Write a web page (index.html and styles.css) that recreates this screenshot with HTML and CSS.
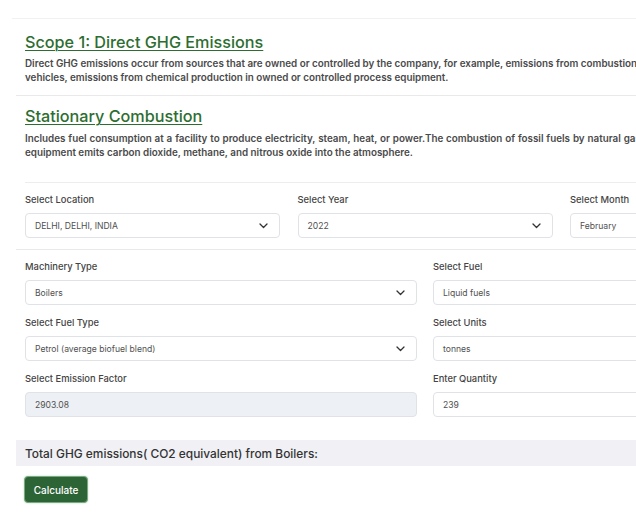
FILE: index.html
```html
<!DOCTYPE html>
<html lang="en">
<head>
<meta charset="utf-8">
<title>Scope 1: Direct GHG Emissions</title>
<link rel="stylesheet" href="styles.css">
</head>
<body>
<div class="page">
  <div class="card">
    <section class="intro">
      <h1 class="title">Scope 1: Direct GHG Emissions</h1>
      <p class="desc"><span class="line">Direct GHG emissions occur from sources that are owned or controlled by the company, for example, emissions from combustion in owned or controlled boilers, furnaces,</span><span class="line">vehicles, emissions from chemical production in owned or controlled process equipment.</span></p>
    </section>
    <hr class="sep sep-wide">
    <section class="intro">
      <h2 class="title">Stationary Combustion</h2>
      <p class="desc desc-just"><span class="line line-just">Includes fuel consumption at a facility to produce electricity, steam, heat, or power.The combustion of fossil fuels by natural gas boilers, furnaces and other</span><span class="line">equipment emits carbon dioxide, methane, and nitrous oxide into the atmosphere.</span></p>
    </section>
    <hr class="sep sep-inner">
    <div class="grid grid-3">
      <div class="field">
        <label class="label">Select Location</label>
        <div class="select"><span>DELHI, DELHI, INDIA</span><svg class="chev" width="9" height="6" viewBox="0 0 9 6"><path d="M1 1l3.5 3.5L8 1" fill="none" stroke="#333" stroke-width="1.3" stroke-linecap="round" stroke-linejoin="round"/></svg></div>
      </div>
      <div class="field">
        <label class="label">Select Year</label>
        <div class="select"><span>2022</span><svg class="chev" width="9" height="6" viewBox="0 0 9 6"><path d="M1 1l3.5 3.5L8 1" fill="none" stroke="#333" stroke-width="1.3" stroke-linecap="round" stroke-linejoin="round"/></svg></div>
      </div>
      <div class="field">
        <label class="label">Select Month</label>
        <div class="select"><span>February</span><svg class="chev" width="9" height="6" viewBox="0 0 9 6"><path d="M1 1l3.5 3.5L8 1" fill="none" stroke="#333" stroke-width="1.3" stroke-linecap="round" stroke-linejoin="round"/></svg></div>
      </div>
    </div>
    <hr class="sep sep-wide">
    <div class="grid grid-2">
      <div class="field">
        <label class="label">Machinery Type</label>
        <div class="select"><span>Boilers</span><svg class="chev" width="9" height="6" viewBox="0 0 9 6"><path d="M1 1l3.5 3.5L8 1" fill="none" stroke="#333" stroke-width="1.3" stroke-linecap="round" stroke-linejoin="round"/></svg></div>
      </div>
      <div class="field">
        <label class="label">Select Fuel</label>
        <div class="select"><span>Liquid fuels</span><svg class="chev" width="9" height="6" viewBox="0 0 9 6"><path d="M1 1l3.5 3.5L8 1" fill="none" stroke="#333" stroke-width="1.3" stroke-linecap="round" stroke-linejoin="round"/></svg></div>
      </div>
      <div class="field">
        <label class="label">Select Fuel Type</label>
        <div class="select"><span>Petrol (average biofuel blend)</span><svg class="chev" width="9" height="6" viewBox="0 0 9 6"><path d="M1 1l3.5 3.5L8 1" fill="none" stroke="#333" stroke-width="1.3" stroke-linecap="round" stroke-linejoin="round"/></svg></div>
      </div>
      <div class="field">
        <label class="label">Select Units</label>
        <div class="select"><span>tonnes</span><svg class="chev" width="9" height="6" viewBox="0 0 9 6"><path d="M1 1l3.5 3.5L8 1" fill="none" stroke="#333" stroke-width="1.3" stroke-linecap="round" stroke-linejoin="round"/></svg></div>
      </div>
      <div class="field">
        <label class="label">Select Emission Factor</label>
        <div class="input input-disabled">2903.08</div>
      </div>
      <div class="field">
        <label class="label">Enter Quantity</label>
        <div class="input">239</div>
      </div>
    </div>
    <div class="total">Total GHG emissions( CO2 equivalent) from Boilers:</div>
    <button class="btn" type="button">Calculate</button>
  </div>
</div>
</body>
</html>
```
FILE: styles.css
```css
html, body {
  margin: 0;
  padding: 0;
  background: #fff;
  overflow: hidden;
}
body {
  font-family: Inter, "Open Sans", sans-serif;
  color: #444;
}
.page {
  width: 900px;
  padding-top: 18px;
  padding-left: 12px;
}
.card {
  border-top: 1px solid #f1f1f1;
  padding-bottom: 20px;
}
.intro {
  padding-left: 13px;
}
.title {
  margin: 0;
  font-size: 16.2px;
  line-height: 24px;
  font-weight: 500;
  color: #2d6e30;
  text-decoration: underline;
  text-decoration-thickness: 1px;
  text-underline-offset: 2px;
}
h1.title {
  padding-top: 11px;
}
h2.title {
  padding-top: 8px;
}
.desc {
  margin: 2px 0 0;
  font-size: 9.85px;
  line-height: 14px;
  font-weight: 600;
  color: #4a4a4a;
  width: 840px;
}
.desc-just {
  margin-top: 3px;
}
.line {
  display: block;
  white-space: nowrap;
}
.line-just {
  word-spacing: 0.4px;
}
.sep {
  border: 0;
  height: 1px;
  background: #e9e9e9;
  margin: 0;
}
.sep-wide {
  margin-left: 4px;
  margin-top: 11px;
}
.sep-inner {
  margin-left: 13px;
  margin-top: 23px;
  background: #ededed;
}
.grid {
  display: grid;
  padding-left: 13px;
  row-gap: 11px;
}
.grid-3 {
  grid-template-columns: repeat(3, 255px);
  column-gap: 17.5px;
  margin-top: 10px;
}
.grid-2 {
  grid-template-columns: repeat(2, 392px);
  column-gap: 16px;
  margin-top: 10px;
}
.field {
  display: flex;
  flex-direction: column;
  gap: 6px;
}
.label {
  font-size: 9.4px;
  line-height: 14px;
  font-weight: 500;
  color: #444;
}
.select, .input {
  box-sizing: border-box;
  height: 25px;
  border: 1px solid #dfe2e7;
  border-radius: 4px;
  padding: 0 11px 0 9px;
  display: flex;
  align-items: center;
  justify-content: space-between;
  font-size: 8.6px;
  color: #505050;
  background: #fff;
}
.input-disabled {
  background: #edf0f4;
}
.chev {
  flex: none;
}
.total {
  margin-top: 23px;
  margin-left: 4px;
  height: 26px;
  background: #f0f0f5;
  padding-left: 9px;
  display: flex;
  align-items: center;
  font-size: 11.9px;
  font-weight: 500;
  color: #333;
}
.btn {
  margin-top: 10px;
  margin-left: 12px;
  width: 64px;
  height: 27px;
  box-sizing: border-box;
  background: #2d6436;
  border: 1px solid #7aa981;
  border-radius: 4px;
  box-shadow: 0 0 2px #b6d3ba;
  color: #fff;
  font-family: inherit;
  font-size: 10px;
  font-weight: 500;
  padding: 0;
  cursor: pointer;
}
```
